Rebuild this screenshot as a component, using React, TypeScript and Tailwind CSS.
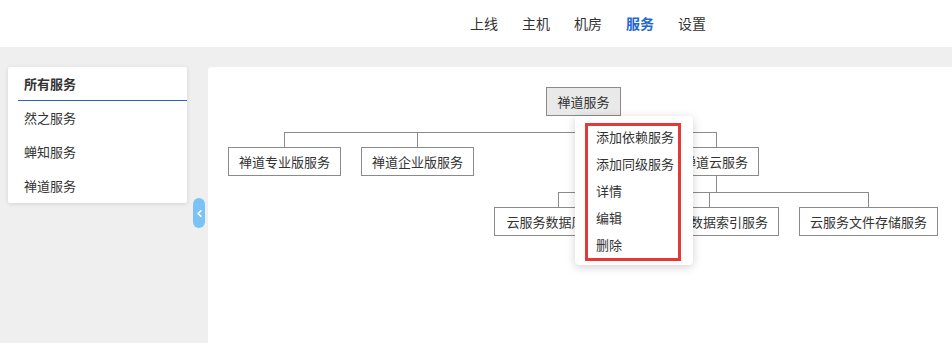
import { ChevronLeft } from 'lucide-react';

const navItems = ['上线', '主机', '机房', '服务', '设置'];
const sideItems = ['然之服务', '蝉知服务', '禅道服务'];
const menuItems = ['添加依赖服务', '添加同级服务', '详情', '编辑', '删除'];

interface NodeBoxProps {
  label: string;
  left: number;
  top: number;
  width: number;
  active?: boolean;
}

const NodeBox = ({ label, left, top, width, active }: NodeBoxProps) => (
  <div
    className={`absolute h-[29px] border border-[#8a8a8a] flex items-center justify-center text-[13px] text-[#333] whitespace-nowrap ${
      active ? 'bg-[#e9e9e9]' : 'bg-white'
    }`}
    style={{ left, top, width }}
  >
    {label}
  </div>
);

const HLine = ({ left, top, width }: { left: number; top: number; width: number }) => (
  <div className="absolute h-px bg-[#8a8a8a]" style={{ left, top, width }} />
);

const VLine = ({ left, top, height }: { left: number; top: number; height: number }) => (
  <div className="absolute w-px bg-[#8a8a8a]" style={{ left, top, height }} />
);

const ServiceTree = () => (
  <div className="relative w-full h-full">
    {/* level 1 connectors */}
    <VLine left={375} top={49} height={16} />
    <HLine left={76} top={65} width={433} />
    <VLine left={76} top={65} height={15} />
    <VLine left={209} top={65} height={15} />
    <VLine left={508} top={65} height={15} />

    {/* level 2 connectors */}
    <VLine left={508} top={109} height={16} />
    <HLine left={350} top={125} width={311} />
    <VLine left={350} top={125} height={15} />
    <VLine left={501} top={125} height={15} />
    <VLine left={660} top={125} height={15} />

    <NodeBox label="禅道服务" left={338} top={20} width={75} active />
    <NodeBox label="禅道专业版服务" left={20} top={80} width={113} />
    <NodeBox label="禅道企业版服务" left={153} top={80} width={113} />
    <NodeBox label="禅道云服务" left={464} top={80} width={87} />
    <NodeBox label="云服务数据库服务" left={286} top={140} width={129} />
    <NodeBox label="云服务数据索引服务" left={432} top={140} width={139} />
    <NodeBox label="云服务文件存储服务" left={591} top={140} width={139} />

    {/* context menu */}
    <div className="absolute left-[367px] top-[49px] w-[118px] h-[149px] bg-white rounded-[4px] shadow-[0_2px_10px_rgba(0,0,0,0.18)] pt-[7px] pl-[10px]">
      <div className="w-[96px] h-[138px] border-[3px] border-[#e53935]">
        <div className="-mt-[3px]">
          {menuItems.map((item) => (
            <div key={item} className="h-[27px] flex items-center pl-[8px] text-[13px] text-[#333] whitespace-nowrap">
              {item}
            </div>
          ))}
        </div>
      </div>
    </div>
  </div>
);

const App = () => {
  return (
    <div
      className="w-[952px] h-[343px] overflow-hidden bg-[#efefef] flex flex-col"
      style={{ fontFamily: '"Noto Sans CJK SC", "Liberation Sans", sans-serif' }}
    >
      <header className="h-[47px] bg-white flex items-center pl-[470px] shrink-0">
        <nav className="flex items-center gap-[24px]">
          {navItems.map((item) => (
            <span
              key={item}
              className={`text-[14px] ${item === '服务' ? 'text-[#1f66d6] font-bold' : 'text-[#333]'}`}
            >
              {item}
            </span>
          ))}
        </nav>
      </header>

      <div className="flex flex-1 pt-[20px] pl-[8px]">
        <aside className="w-[179px] h-[136px] bg-white rounded-[2px] shadow-[0_1px_4px_rgba(0,0,0,0.12)] shrink-0">
          <div className="h-[34px] ml-[10px] flex items-center pl-[6px] text-[13px] font-bold text-[#333] border-b border-[#2a64b8]">
            所有服务
          </div>
          {sideItems.map((item) => (
            <div key={item} className="h-[34px] flex items-center pl-[16px] text-[13px] text-[#333]">
              {item}
            </div>
          ))}
        </aside>

        <div className="w-[21px] shrink-0 pl-[6px] pt-[131px]">
          <div className="w-[12px] h-[30px] rounded-full bg-[#7cc3f5] flex items-center justify-center">
            <ChevronLeft className="w-[11px] h-[11px] text-white" strokeWidth={3.5} />
          </div>
        </div>

        <main className="flex-1 bg-white rounded-tl-[3px]">
          <ServiceTree />
        </main>
      </div>
    </div>
  );
};

export default App;
